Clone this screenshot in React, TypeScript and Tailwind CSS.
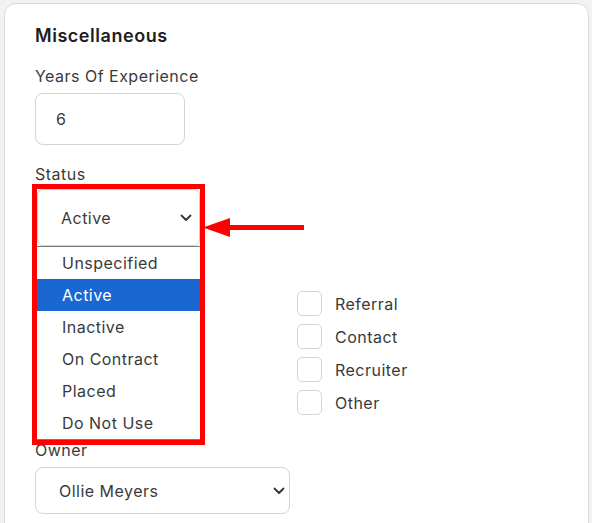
import React from "react";

function Chevron({ className = "" }: { className?: string }) {
  return (
    <svg className={className} width="12" height="8" viewBox="0 0 12 8" fill="none">
      <path d="M1.5 1.5 L6 6 L10.5 1.5" stroke="#333" strokeWidth="1.8" strokeLinecap="round" strokeLinejoin="round" />
    </svg>
  );
}

const options = ["Unspecified", "Active", "Inactive", "On Contract", "Placed", "Do Not Use"];
const sources = ["Referral", "Contact", "Recruiter", "Other"];

export default function App() {
  return (
    <div
      className="h-[523px] w-[592px] overflow-hidden bg-[#f2f2f2] pl-[4px] pr-[3px] pt-[3px] tracking-[0.03em] text-[#3a3a3a]"
      style={{ fontFamily: "Inter, 'Noto Sans', sans-serif" }}
    >
      <div className="h-[560px] rounded-t-[12px] border border-[#dadada] bg-white pl-[30px]">
        <h2 className="pt-[20px] text-[18px] font-semibold leading-[24px] tracking-[0.03em] text-[#1e1e1e]">Miscellaneous</h2>
        <div className="mt-[16px] text-[16px] leading-[24px]">Years Of Experience</div>
        <div className="mt-[5px] flex h-[52px] w-[150px] items-center rounded-[8px] border border-[#d4d4d4] pl-[20px] text-[16px]">
          6
        </div>
        <div className="mt-[17px] text-[16px] leading-[24px]">Status</div>
        <div className="relative mt-[3px] h-[57px] w-[165px]">
          <div className="absolute left-[-3px] top-[-5px] z-10 w-[173px] border-[5px] border-[#ff0000] bg-white">
            <div className="flex h-[57px] items-center justify-between rounded-[6px] border border-[#d0d0d0] pl-[23px] pr-[7px] text-[16px]">
              <span>Active</span>
              <Chevron />
            </div>
            <div className="border-t border-b border-[#7a7a7a]">
              {options.map((o) => (
                <div
                  key={o}
                  className={
                    o === "Active"
                      ? "flex h-[32px] items-center bg-[#1a67d2] pl-[25px] text-[16px] text-white"
                      : "flex h-[32px] items-center pl-[25px] text-[16px]"
                  }
                >
                  {o}
                </div>
              ))}
            </div>
          </div>
          <div className="absolute left-[168px] top-[29px] flex items-center">
            <svg width="101" height="20" viewBox="0 0 101 20">
              <polygon points="0,9.5 27,0 27,19" fill="#ff0000" />
              <rect x="26" y="7" width="75" height="5" fill="#ff0000" />
            </svg>
          </div>
        </div>
        <div className="ml-[262px] mt-[45px] flex flex-col gap-[8px]">
          {sources.map((s) => (
            <div key={s} className="flex h-[25px] items-center gap-[13px]">
              <div className="h-[25px] w-[25px] rounded-[5px] border border-[#d4d4d4]" />
              <span className="text-[16px] leading-[24px]">{s}</span>
            </div>
          ))}
        </div>
        <div className="mt-[23px] text-[16px] leading-[24px]">Owner</div>
        <div className="mt-[5px] flex h-[47px] w-[255px] items-center justify-between rounded-[8px] border border-[#d4d4d4] pl-[23px] pr-[4px] text-[16px]">
          <span>Ollie Meyers</span>
          <Chevron />
        </div>
      </div>
    </div>
  );
}
